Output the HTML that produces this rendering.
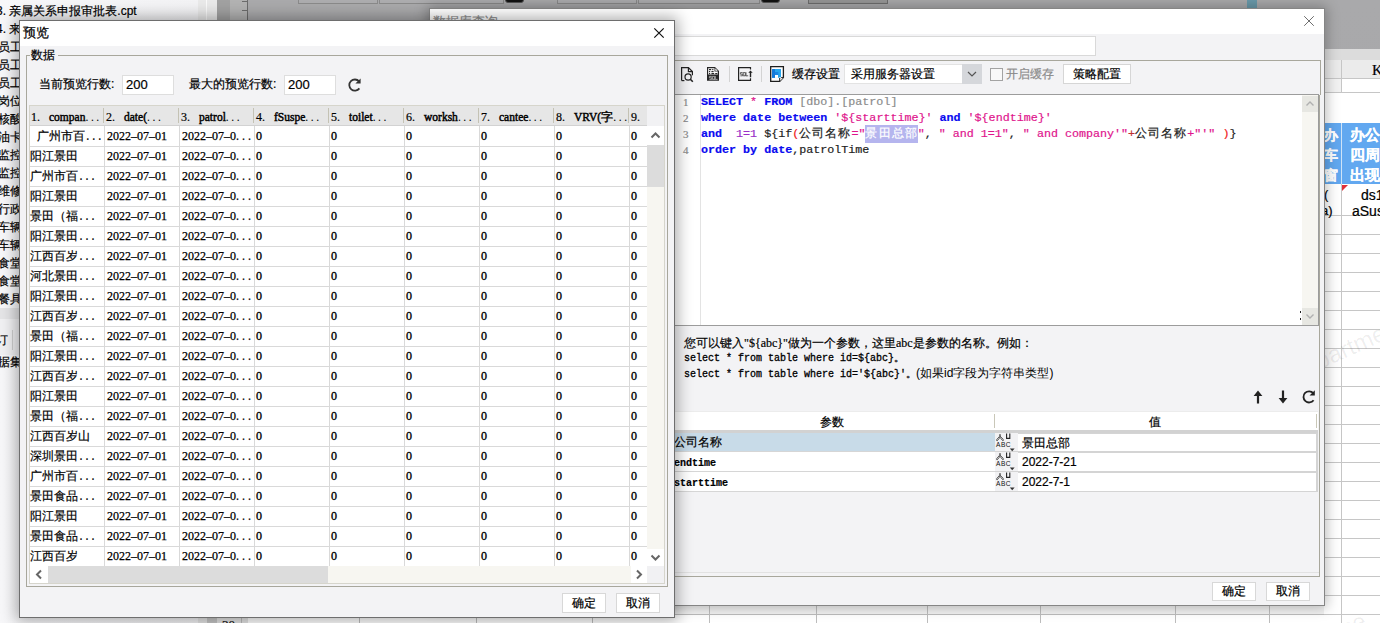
<!DOCTYPE html><html><head><meta charset="utf-8"><style>
*{box-sizing:border-box}
html,body{margin:0;padding:0}
body{width:1380px;height:623px;overflow:hidden;position:relative;background:#a9a9ab;font-family:"Liberation Sans",sans-serif;font-size:12px;color:#000;-webkit-text-stroke:.2px currentColor}
.a{position:absolute}
.mono{font-family:"Liberation Mono",monospace}
.serif{font-family:"Liberation Serif",serif}
.it{position:absolute;white-space:nowrap;font-size:12px;line-height:18px;height:18px}
#fd{left:19px;top:20px;width:656px;height:598px;background:#f3f3f5;border:1px solid #6e6e6e;box-shadow:0 0 14px 3px rgba(0,0,0,.32)}
#bd{left:429px;top:8px;width:896px;height:598px;background:#f3f3f5;border:1px solid #858585;box-shadow:0 0 12px 2px rgba(0,0,0,.26)}
</style></head><body>
<div class="a" style="left:0;top:0;width:1380px;height:623px;background:linear-gradient(#a9a9ab,#a6a6a8)"></div>
<div class="a" style="left:298px;top:-2px;width:80px;height:6px;background:#acacae;border:1px solid #8a8a8a"></div>
<div class="a" style="left:379px;top:-2px;width:125px;height:6px;background:#acacae;border:1px solid #8a8a8a"></div>
<div class="a" style="left:557px;top:-2px;width:80px;height:6px;background:#acacae;border:1px solid #8a8a8a"></div>
<div class="a" style="left:638px;top:-2px;width:122px;height:6px;background:#acacae;border:1px solid #8a8a8a"></div>
<div class="a" style="left:808px;top:-2px;width:80px;height:6px;background:#979797;border:1px solid #6e6e6e"></div>
<div class="a" style="left:505px;top:-3px;width:19px;height:6px;background:#111;border:1px solid #555;border-radius:3px"></div>
<div class="a" style="left:761px;top:-3px;width:19px;height:6px;background:#111;border:1px solid #555;border-radius:3px"></div>
<div class="a" style="left:1247px;top:0;width:10px;height:10px;background:#6a9aaa"></div>
<div class="a" style="left:0;top:0;width:198px;height:308px;background:#fff"></div>
<div class="a" style="left:0;top:0;width:198px;height:623px;background:linear-gradient(90deg,#f7f7f9,#f2f2f4)"></div>
<div class="it" style="top:2px;left:-4px">3. 亲属关系申报审批表.cpt</div>
<div class="it" style="top:20px;left:-4px">4. 来访人员登记表.cpt</div>
<div class="it" style="top:38px;left:-2px">员工信息表.cpt</div>
<div class="it" style="top:56px;left:-2px">员工考勤表.cpt</div>
<div class="it" style="top:74px;left:-2px">员工请假表.cpt</div>
<div class="it" style="top:92px;left:-2px">岗位职责表.cpt</div>
<div class="it" style="top:110px;left:-2px">核酸检测表.cpt</div>
<div class="it" style="top:128px;left:-2px">油卡使用表.cpt</div>
<div class="it" style="top:146px;left:-2px">监控巡查表.cpt</div>
<div class="it" style="top:164px;left:-2px">监控设备表.cpt</div>
<div class="it" style="top:182px;left:-2px">维修记录表.cpt</div>
<div class="it" style="top:200px;left:-2px">行政巡查表.cpt</div>
<div class="it" style="top:218px;left:-2px">车辆使用表.cpt</div>
<div class="it" style="top:236px;left:-2px">车辆维修表.cpt</div>
<div class="it" style="top:254px;left:-2px">食堂巡查表.cpt</div>
<div class="it" style="top:272px;left:-2px">食堂采购表.cpt</div>
<div class="it" style="top:290px;left:-2px">餐具消毒表.cpt</div>
<div class="a" style="left:0;top:308px;width:198px;height:11px;background:#e4e4e6"></div>
<div class="a" style="left:0;top:319px;width:198px;height:36px;background:#f0f0f2"></div>
<div class="it" style="left:-4px;top:331px">订</div>
<div class="a" style="left:12px;top:330px;width:1px;height:20px;background:#d0d0d0"></div>
<div class="it" style="left:-2px;top:353px">据集</div>
<div class="a" style="left:198px;top:0;width:19px;height:623px;background:#e9e9e9"></div>
<div class="a" style="left:206px;top:0;width:1px;height:623px;background:#fafafa"></div>
<div class="a" style="left:217px;top:0;width:13px;height:623px;background:#a1a1a1"></div>
<div class="a" style="left:230px;top:0;width:17px;height:623px;background:#b2b2b2"></div>
<div class="a" style="left:247px;top:0;width:1px;height:623px;background:#6c6c6c"></div>
<div class="a" style="left:242px;top:1px;width:5px;height:1px;background:#6c6c6c"></div>
<div class="a" style="left:242px;top:10px;width:5px;height:1px;background:#6c6c6c"></div>
<div class="a" style="left:1324px;top:49px;width:56px;height:11px;background:#dcdcdc"></div>
<div class="a" style="left:1324px;top:60px;width:56px;height:19px;background:#ebebeb;border-bottom:1px solid #c6c6c6"></div>
<div class="a" style="left:1341px;top:60px;width:1px;height:33px;background:#c6c6c6"></div>
<div class="a serif" style="left:1372px;top:61px;font-size:15px;line-height:18px">K</div>
<div class="a" style="left:1324px;top:79px;width:17px;height:14px;background:#f2f2f2;border-bottom:1px solid #c6c6c6"></div>
<div class="a" style="left:1342px;top:79px;width:38px;height:14px;background:#fff;border-bottom:1px solid #c6c6c6"></div>
<div class="a" style="left:1324px;top:93px;width:56px;height:530px;background:#fff"></div>
<div class="a" style="left:1324px;top:123px;width:56px;height:61px;background:#62a8f0"></div>
<div class="a" style="left:1341px;top:123px;width:1px;height:61px;background:#cfe3f7"></div>
<div class="a" style="left:1324px;top:125px;font-size:14px;font-weight:bold;color:#fff;line-height:20px">办</div>
<div class="a" style="left:1350px;top:125px;font-size:15px;font-weight:bold;color:#fff;line-height:20px;white-space:nowrap">办公</div>
<div class="a" style="left:1324px;top:145px;font-size:14px;font-weight:bold;color:#fff;line-height:20px">车</div>
<div class="a" style="left:1350px;top:145px;font-size:15px;font-weight:bold;color:#fff;line-height:20px;white-space:nowrap">四周</div>
<div class="a" style="left:1324px;top:165px;font-size:14px;font-weight:bold;color:#fff;line-height:20px">窗</div>
<div class="a" style="left:1350px;top:165px;font-size:15px;font-weight:bold;color:#fff;line-height:20px;white-space:nowrap">出现</div>
<div class="a" style="left:1341px;top:184px;width:1px;height:439px;background:#c6c6c6"></div>
<div class="a" style="left:1324px;top:215px;width:56px;height:1px;background:#c6c6c6"></div>
<div class="a" style="left:1324px;top:234px;width:56px;height:1px;background:#c6c6c6"></div>
<div class="a" style="left:1324px;top:253px;width:56px;height:1px;background:#c6c6c6"></div>
<div class="a" style="left:1324px;top:272px;width:56px;height:1px;background:#c6c6c6"></div>
<div class="a" style="left:1324px;top:291px;width:56px;height:1px;background:#c6c6c6"></div>
<div class="a" style="left:1324px;top:310px;width:56px;height:1px;background:#c6c6c6"></div>
<div class="a" style="left:1324px;top:329px;width:56px;height:1px;background:#c6c6c6"></div>
<div class="a" style="left:1324px;top:348px;width:56px;height:1px;background:#c6c6c6"></div>
<div class="a" style="left:1324px;top:367px;width:56px;height:1px;background:#c6c6c6"></div>
<div class="a" style="left:1324px;top:386px;width:56px;height:1px;background:#c6c6c6"></div>
<div class="a" style="left:1324px;top:405px;width:56px;height:1px;background:#c6c6c6"></div>
<div class="a" style="left:1324px;top:424px;width:56px;height:1px;background:#c6c6c6"></div>
<div class="a" style="left:1324px;top:443px;width:56px;height:1px;background:#c6c6c6"></div>
<div class="a" style="left:1324px;top:462px;width:56px;height:1px;background:#c6c6c6"></div>
<div class="a" style="left:1324px;top:481px;width:56px;height:1px;background:#c6c6c6"></div>
<div class="a" style="left:1324px;top:500px;width:56px;height:1px;background:#c6c6c6"></div>
<div class="a" style="left:1324px;top:519px;width:56px;height:1px;background:#c6c6c6"></div>
<div class="a" style="left:1324px;top:538px;width:56px;height:1px;background:#c6c6c6"></div>
<div class="a" style="left:1324px;top:557px;width:56px;height:1px;background:#c6c6c6"></div>
<div class="a" style="left:1324px;top:576px;width:56px;height:1px;background:#c6c6c6"></div>
<div class="a" style="left:1324px;top:595px;width:56px;height:1px;background:#c6c6c6"></div>
<div class="a" style="left:1324px;top:614px;width:56px;height:1px;background:#c6c6c6"></div>
<div class="a" style="left:1324px;top:187px;font-size:13px;line-height:16px">(</div>
<div class="a" style="left:1321px;top:203px;font-size:13px;line-height:16px">a)</div>
<div class="a" style="left:1361px;top:187px;font-size:14px;line-height:16px">ds1</div>
<div class="a" style="left:1352px;top:203px;font-size:14px;line-height:16px;white-space:nowrap">aSus</div>
<div class="a" style="left:1342px;top:185px;width:0;height:0;border-top:6px solid #e0303a;border-right:6px solid transparent"></div>
<div class="a" style="left:1322px;top:347px;font-size:24px;line-height:28px;color:rgba(0,0,0,.07);transform:rotate(-24deg);transform-origin:0 100%;white-space:nowrap">partment</div>
<div class="a" style="left:1322px;top:626px;font-size:24px;line-height:28px;color:rgba(0,0,0,.07);transform:rotate(-24deg);transform-origin:0 100%;white-space:nowrap">rtuse</div>
<div class="a" style="left:248px;top:605px;width:1076px;height:9px;background:#f2f2f2"></div>
<div class="a" style="left:248px;top:614px;width:1076px;height:1px;background:#bdbdbd"></div>
<div class="a" style="left:248px;top:615px;width:1076px;height:8px;background:#fff"></div>
<div class="a" style="left:198px;top:605px;width:50px;height:18px;background:#e4e4e4"></div><div class="a" style="left:207px;top:605px;width:10px;height:18px;background:#c6c6c6"></div>
<div class="a serif" style="left:222px;top:617px;font-size:13px;line-height:16px">30</div>
<div class="a" style="left:241px;top:605px;width:1px;height:18px;background:#bdbdbd"></div>
<div class="a" style="left:359px;top:605px;width:1px;height:18px;background:#bdbdbd"></div>
<div class="a" style="left:476px;top:605px;width:1px;height:18px;background:#bdbdbd"></div>
<div class="a" style="left:592px;top:605px;width:1px;height:18px;background:#bdbdbd"></div>
<div class="a" style="left:709px;top:605px;width:1px;height:18px;background:#bdbdbd"></div>
<div class="a" style="left:816px;top:605px;width:1px;height:18px;background:#bdbdbd"></div>
<div class="a" style="left:927px;top:605px;width:1px;height:18px;background:#bdbdbd"></div>
<div class="a" style="left:1040px;top:605px;width:1px;height:18px;background:#bdbdbd"></div>
<div class="a" style="left:1175px;top:605px;width:1px;height:18px;background:#bdbdbd"></div>
<div class="a" style="left:1269px;top:605px;width:1px;height:18px;background:#bdbdbd"></div>
<div id="bd" class="a"></div>
<div class="a" style="left:430px;top:9px;width:894px;height:25px;background:#fff"></div>
<div class="a" style="left:433px;top:13px;font-size:13px;line-height:18px;color:#8c8c8c;white-space:nowrap">数据库查询</div>
<svg class="a" style="left:1303px;top:15px" width="12" height="12" viewBox="0 0 12 12"><path d="M1.2 1.2L10.8 10.8M10.8 1.2L1.2 10.8" stroke="#6e6e6e" stroke-width="1" fill="none"/></svg>
<div class="a" style="left:436px;top:36px;width:660px;height:20px;background:#fff;border:1px solid #d9d9d9"></div>
<div class="a" style="left:434px;top:60px;width:887px;height:35px;border:1px solid #a8a79c;border-bottom:none"></div>
<svg class="a" style="left:676px;top:62px" width="114" height="26" viewBox="0 0 114 26">
<g fill="none" stroke="#222" stroke-width="1.2">
<path d="M5.6 18.6V5.6H12.4L16.4 9.6V13.3"/><path d="M12.4 5.6V9.6H16.4"/>
<path d="M5.6 18.6H8.4"/>
<circle cx="12.1" cy="15.0" r="3.1"/><path d="M14.3 17.3L16.8 19.8" stroke-width="1.6"/>
</g>
<path d="M31 5H39L43 9V18.8H31Z" fill="#262626"/>
<path d="M32.2 6.2H38.5V9.6H41.8V12.4H32.2Z" fill="#fff"/>
<path d="M39.3 6.3L41.7 8.7H39.3Z" fill="#fff"/>
<g fill="#2a2a2a"><rect x="33" y="7.0" width="2.2" height="1.2"/><rect x="36.2" y="7.0" width="1.2" height="1.2"/><rect x="33" y="9.0" width="1.2" height="1.2"/><rect x="35.4" y="9.0" width="2.2" height="1.2"/><rect x="33" y="11.0" width="1.2" height="1.2"/><rect x="35.4" y="11.0" width="2.8" height="1.2"/><rect x="39.2" y="11.0" width="2.2" height="1.2"/></g>
<path d="M35.73 14.40H33.40V15.90H35.73V17.40H33.40 M36.33 14.40H38.67V17.40H36.33Z M37.73 16.50L39.07 17.80 M39.27 14.10V17.40H41.60" stroke="#b0b0b0" stroke-width="0.9" fill="none"/>
<rect x="53" y="4" width="1" height="16" fill="#d3d3d3"/>
<g fill="none" stroke="#222" stroke-width="1.2"><path d="M74.5 7.6V5.6H62.6V18.3H74.5V16.3"/></g>
<path d="M66.60 10.60H64.40V12.20H66.60V13.80H64.40 M67.20 10.60H69.40V13.80H67.20Z M68.52 12.84L69.80 14.20 M70.00 10.30V13.80H72.20" stroke="#555" stroke-width="0.95" fill="none"/>
<path d="M74.5 8.4L72.3 10.8H73.8V15.2H75.2V10.8H76.7Z" fill="#222"/>
<rect x="85" y="4" width="1" height="16" fill="#d3d3d3"/>
<path d="M94.7 4.7H107.4V15.6L103.7 19.3H94.7Z" fill="#fff" stroke="#1d1d1d" stroke-width="1.3"/>
<path d="M103.7 19.3V15.6H107.4" fill="#fff" stroke="#1d1d1d" stroke-width="1"/>
<rect x="96" y="7" width="9" height="8.8" fill="#27a6ee"/>
<path d="M96 15.8V8.2Q96 7 97.2 7H99V15.8Z" fill="#1479da"/>
<rect x="99" y="10" width="3.3" height="3" fill="#1a84e2"/>
<rect x="99" y="13" width="3" height="2.9" fill="#fff"/>
<path d="M103.2 15.9V15.2H105.2V15.9Z" fill="#fff"/>
</svg>
<div class="a" style="left:792px;top:65px;font-size:12px;line-height:18px;white-space:nowrap">缓存设置</div>
<div class="a" style="left:844px;top:64px;width:138px;height:20px;background:#fff;border:1px solid #e3e3e3"></div>
<div class="a" style="left:962px;top:64px;width:20px;height:20px;background:#d5d7db"></div>
<svg class="a" style="left:965px;top:68px" width="14" height="12"><path d="M3 4L7 8L11 4" stroke="#555" stroke-width="1.2" fill="none"/></svg>
<div class="a" style="left:851px;top:65px;font-size:12px;line-height:18px;white-space:nowrap">采用服务器设置</div>
<div class="a" style="left:990px;top:68px;width:13px;height:13px;border:1px solid #a3a3a3;background:#f8f8f8"></div>
<div class="a" style="left:1006px;top:65px;font-size:12px;line-height:18px;color:#8a8a8a;white-space:nowrap">开启缓存</div>
<div class="a" style="left:1063px;top:64px;width:68px;height:20px;background:#fff;border:1px solid #d6d6d6"></div>
<div class="a" style="left:1073px;top:65px;font-size:12px;line-height:18px;white-space:nowrap">策略配置</div>
<div class="a" style="left:673px;top:94px;width:646px;height:232px;background:#fff;border:1px solid #9c9c9c"></div>
<div class="a" style="left:700px;top:95px;width:1px;height:230px;background:#e3e3e3"></div>
<div class="a serif" style="left:683px;top:94px;font-size:11px;line-height:16px;color:#8a8a8a">1</div>
<div class="a serif" style="left:683px;top:110px;font-size:11px;line-height:16px;color:#8a8a8a">2</div>
<div class="a serif" style="left:683px;top:126px;font-size:11px;line-height:16px;color:#8a8a8a">3</div>
<div class="a serif" style="left:683px;top:142px;font-size:11px;line-height:16px;color:#8a8a8a">4</div>
<div class="a mono" style="left:701px;top:94px;font-size:11.7px;line-height:16px;white-space:nowrap"><span style="color:#0a0af0;font-weight:bold;">SELECT</span><span style="color:#222;">&nbsp;</span><span style="color:#e0148c;">*</span><span style="color:#222;">&nbsp;</span><span style="color:#0a0af0;font-weight:bold;">FROM</span><span style="color:#8c8c8c;">&nbsp;[dbo].[patrol]</span></div>
<div class="a mono" style="left:701px;top:110px;font-size:11.7px;line-height:16px;white-space:nowrap"><span style="color:#0a0af0;font-weight:bold;">where</span><span style="color:#222;">&nbsp;</span><span style="color:#0a0af0;font-weight:bold;">date</span><span style="color:#222;">&nbsp;</span><span style="color:#0a0af0;font-weight:bold;">between</span><span style="color:#e0148c;">&nbsp;'${starttime}'</span><span style="color:#222;">&nbsp;</span><span style="color:#0a0af0;font-weight:bold;">and</span><span style="color:#e0148c;">&nbsp;'${endtime}'</span></div>
<div class="a mono" style="left:701px;top:126px;font-size:11.7px;line-height:16px;white-space:nowrap"><span style="color:#0a0af0;font-weight:bold;">and</span><span style="color:#222;">&nbsp;&nbsp;</span><span style="color:#9b30c8;">1=1</span><span style="color:#222;">&nbsp;${if</span><span style="color:#f02020;">(</span><span style="color:#222;letter-spacing:1.05px;">公司名称</span><span style="color:#e0148c;">="</span><span style="background:#b5b5ee;color:#fff;display:inline-block;height:18px;vertical-align:top;margin-top:-1px;line-height:18px;letter-spacing:1.05px">景田总部</span><span style="color:#e0148c;">"</span><span style="color:#222;">,</span><span style="color:#e0148c;">&nbsp;"&nbsp;and&nbsp;1=1"</span><span style="color:#222;">,</span><span style="color:#e0148c;">&nbsp;"&nbsp;and&nbsp;company'"</span><span style="color:#c03030;">+</span><span style="color:#222;letter-spacing:1.05px;">公司名称</span><span style="color:#e0148c;">+"'"&nbsp;</span><span style="color:#f02020;">)</span><span style="color:#222;">}</span></div>
<div class="a mono" style="left:701px;top:142px;font-size:11.7px;line-height:16px;white-space:nowrap"><span style="color:#0a0af0;font-weight:bold;">order</span><span style="color:#222;">&nbsp;</span><span style="color:#0a0af0;font-weight:bold;">by</span><span style="color:#222;">&nbsp;</span><span style="color:#0a0af0;font-weight:bold;">date</span><span style="color:#222;">,patrolTime</span></div>
<div class="a" style="left:1302px;top:95px;width:16px;height:230px;background:#f7f6f1"></div>
<div class="a" style="left:1302px;top:96px;width:16px;height:16px;background:#e7e7e2"></div>
<svg class="a" style="left:1302px;top:96px" width="16" height="16"><path d="M4.5 9.5L8 6L11.5 9.5" stroke="#b0b0b0" stroke-width="1.4" fill="none"/></svg>
<div class="a" style="left:1302px;top:308px;width:16px;height:17px;background:#e7e7e2"></div>
<svg class="a" style="left:1302px;top:308px" width="16" height="16"><path d="M4.5 6.5L8 10L11.5 6.5" stroke="#b0b0b0" stroke-width="1.4" fill="none"/></svg>
<div class="a" style="left:1300px;top:311px;width:1px;height:2px;background:#222"></div>
<div class="a" style="left:1300px;top:318px;width:1px;height:2px;background:#222"></div>
<div class="a" style="left:684px;top:335px;font-size:12px;line-height:16px;white-space:nowrap">您可以键入<span class="serif">"${abc}"</span>做为一个参数，这里<span class="serif">abc</span>是参数的名称。例如：</div>
<div class="a mono" style="left:684px;top:351px;font-size:10px;line-height:15px;white-space:nowrap;-webkit-text-stroke:.3px #000">select * from table where id=${abc}。</div>
<div class="a mono" style="left:684px;top:366px;font-size:10px;line-height:15px;white-space:nowrap;-webkit-text-stroke:.3px #000">select * from table where id='${abc}'。<span style="font-family:Liberation Sans;-webkit-text-stroke:0;font-size:12px">(如果id字段为字符串类型)</span></div>
<svg class="a" style="left:1250px;top:388px" width="70" height="18" viewBox="0 0 70 18">
<path d="M8 2.5L3.6 8H6.9V15.5H9.1V8H12.4Z" fill="#222"/>
<path d="M33 15.5L28.6 10H31.9V2.5H34.1V10H37.4Z" fill="#222"/>
<path d="M63.3 5.2A5.6 5.6 0 1 0 63.6 12.2" stroke="#222" stroke-width="1.8" fill="none"/>
<path d="M64.8 2.2V7.4H59.6Z" fill="#222"/>
</svg>
<div class="a" style="left:673px;top:411px;width:645px;height:20px;background:#fff;border-top:1px solid #ececec"></div>
<div class="a" style="left:820px;top:413px;font-size:12px;line-height:18px">参数</div>
<div class="a" style="left:1149px;top:413px;font-size:12px;line-height:18px">值</div>
<div class="a" style="left:994px;top:414px;width:1px;height:14px;background:#c9c7b8"></div>
<div class="a" style="left:1316px;top:414px;width:1px;height:14px;background:#c9c7b8"></div>
<div class="a" style="left:673px;top:430px;width:645px;height:3px;background:#d2d2d2"></div>
<div class="a" style="left:673px;top:433px;width:322px;height:19px;background:#c8dbe8;border-bottom:1px solid #d6d6d6"></div>
<div class="a" style="left:674px;top:433px;font-size:12px;line-height:18px;white-space:nowrap">公司名称</div>
<div class="a" style="left:995px;top:433px;width:323px;height:19px;background:#d4d4d4"></div>
<div class="a" style="left:995px;top:433px;width:23px;height:18px;background:#f2f2f4"></div>
<div class="a" style="left:1018px;top:434px;width:298px;height:17px;background:#fff"></div>
<svg class="a" style="left:995px;top:433px" width="23" height="19" viewBox="0 0 23 19"><path d="M1.6 7.6L5 3.6L8.4 7.6" stroke="#333" stroke-width="1.8" stroke-dasharray="1 .6" fill="none"/><path d="M5 1V3" stroke="#333" stroke-width="1"/><path d="M11.6 0.5V5.4H14.8V0.5" stroke="#222" stroke-width="1.1" fill="none"/><text x="1" y="13.6" font-family="Liberation Sans" font-size="6.6" fill="#111" letter-spacing=".5">ABC</text><path d="M14.8 15.6H19.6L17.2 18.2Z" fill="#333"/></svg>
<div class="a" style="left:1022px;top:434px;font-size:12px;line-height:18px">景田总部</div>
<div class="a" style="left:673px;top:452px;width:322px;height:20px;background:#fff;border-bottom:1px solid #d6d6d6"></div>
<div class="a mono" style="left:674px;top:456px;font-size:10px;line-height:15px;font-weight:bold;white-space:nowrap">endtime</div>
<div class="a" style="left:995px;top:452px;width:323px;height:20px;background:#d4d4d4"></div>
<div class="a" style="left:995px;top:452px;width:23px;height:19px;background:#f2f2f4"></div>
<div class="a" style="left:1018px;top:453px;width:298px;height:18px;background:#fff"></div>
<svg class="a" style="left:995px;top:452px" width="23" height="19" viewBox="0 0 23 19"><path d="M1.6 7.6L5 3.6L8.4 7.6" stroke="#333" stroke-width="1.8" stroke-dasharray="1 .6" fill="none"/><path d="M5 1V3" stroke="#333" stroke-width="1"/><path d="M11.6 0.5V5.4H14.8V0.5" stroke="#222" stroke-width="1.1" fill="none"/><text x="1" y="13.6" font-family="Liberation Sans" font-size="6.6" fill="#111" letter-spacing=".5">ABC</text><path d="M14.8 15.6H19.6L17.2 18.2Z" fill="#333"/></svg>
<div class="a" style="left:1022px;top:454px;font-size:12px;line-height:16px">2022-7-21</div>
<div class="a" style="left:673px;top:472px;width:322px;height:20px;background:#fff;border-bottom:1px solid #d6d6d6"></div>
<div class="a mono" style="left:674px;top:476px;font-size:10px;line-height:15px;font-weight:bold;white-space:nowrap">starttime</div>
<div class="a" style="left:995px;top:472px;width:323px;height:20px;background:#d4d4d4"></div>
<div class="a" style="left:995px;top:472px;width:23px;height:19px;background:#f2f2f4"></div>
<div class="a" style="left:1018px;top:473px;width:298px;height:18px;background:#fff"></div>
<svg class="a" style="left:995px;top:472px" width="23" height="19" viewBox="0 0 23 19"><path d="M1.6 7.6L5 3.6L8.4 7.6" stroke="#333" stroke-width="1.8" stroke-dasharray="1 .6" fill="none"/><path d="M5 1V3" stroke="#333" stroke-width="1"/><path d="M11.6 0.5V5.4H14.8V0.5" stroke="#222" stroke-width="1.1" fill="none"/><text x="1" y="13.6" font-family="Liberation Sans" font-size="6.6" fill="#111" letter-spacing=".5">ABC</text><path d="M14.8 15.6H19.6L17.2 18.2Z" fill="#333"/></svg>
<div class="a" style="left:1022px;top:474px;font-size:12px;line-height:16px">2022-7-1</div>
<div class="a" style="left:434px;top:572px;width:886px;height:1px;background:#e2e2e2"></div>
<div class="a" style="left:434px;top:576px;width:886px;height:1px;background:#a8a79c"></div>
<div class="a" style="left:1319px;top:95px;width:1px;height:481px;background:#a8a79c"></div>
<div class="a" style="left:1212px;top:582px;width:44px;height:19px;background:#fff;border:1px solid #d8d8d8"></div>
<div class="a" style="left:1222px;top:582px;font-size:12px;line-height:18px">确定</div>
<div class="a" style="left:1266px;top:582px;width:44px;height:19px;background:#fff;border:1px solid #d8d8d8"></div>
<div class="a" style="left:1276px;top:582px;font-size:12px;line-height:18px">取消</div>
<div id="fd" class="a"></div>
<div class="a" style="left:20px;top:21px;width:654px;height:25px;background:#fff"></div>
<div class="a" style="left:23px;top:24px;font-size:12.5px;line-height:18px;white-space:nowrap">预览</div>
<svg class="a" style="left:653px;top:27px" width="12" height="12" viewBox="0 0 12 12"><path d="M1.3 1.3L10.7 10.7M10.7 1.3L1.3 10.7" stroke="#111" stroke-width="1.2" fill="none"/></svg>
<div class="a" style="left:26px;top:55px;width:642px;height:532px;border:1px solid #a8a79c;border-right-color:#a8a79c"></div>
<div class="a" style="left:30px;top:46px;width:28px;height:18px;background:#f3f3f5"></div>
<div class="a" style="left:31px;top:46px;font-size:12px;line-height:18px">数据</div>
<div class="a" style="left:39px;top:75px;font-size:12px;line-height:18px;white-space:nowrap">当前预览行数:</div>
<div class="a" style="left:122px;top:75px;width:52px;height:20px;background:#fff;border:1px solid #dedede"></div>
<div class="a" style="left:126px;top:77px;font-size:13px;line-height:16px">200</div>
<div class="a" style="left:189px;top:75px;font-size:12px;line-height:18px;white-space:nowrap">最大的预览行数:</div>
<div class="a" style="left:284px;top:75px;width:52px;height:20px;background:#fff;border:1px solid #dedede"></div>
<div class="a" style="left:288px;top:77px;font-size:13px;line-height:16px">200</div>
<svg class="a" style="left:346px;top:77px" width="16" height="16" viewBox="0 0 16 16"><path d="M13.1 4.4A5.6 5.6 0 1 0 13.4 11.4" stroke="#333" stroke-width="1.8" fill="none"/><path d="M14.6 1.4V6.6H9.4Z" fill="#333"/></svg>
<div class="a" style="left:29px;top:105px;width:636px;height:479px;background:#f6f5ef;border:1px solid #d6d5cc"></div>
<div class="a" style="left:30px;top:106px;width:617px;height:21px;background:#e6e6e6;border-bottom:2px solid #d2d2d2"></div><div class="a" style="left:647px;top:106px;width:17px;height:21px;background:#f2f2f4"></div>
<div class="a serif" style="left:31px;top:109px;font-size:12px;line-height:16px;white-space:nowrap">1.</div>
<div class="a serif" style="left:49px;top:109px;font-size:11.5px;line-height:16px;white-space:nowrap;letter-spacing:0;-webkit-text-stroke:.45px #000">compan<span style="-webkit-text-stroke:0;letter-spacing:2.6px">...</span></div>
<div class="a" style="left:103px;top:108px;width:1px;height:15px;background:#c4c2b4"></div>
<div class="a serif" style="left:106px;top:109px;font-size:12px;line-height:16px;white-space:nowrap">2.</div>
<div class="a serif" style="left:124px;top:109px;font-size:11.5px;line-height:16px;white-space:nowrap;letter-spacing:0;-webkit-text-stroke:.45px #000">date(<span style="-webkit-text-stroke:0;letter-spacing:2.6px">...</span></div>
<div class="a" style="left:178px;top:108px;width:1px;height:15px;background:#c4c2b4"></div>
<div class="a serif" style="left:181px;top:109px;font-size:12px;line-height:16px;white-space:nowrap">3.</div>
<div class="a serif" style="left:199px;top:109px;font-size:11.5px;line-height:16px;white-space:nowrap;letter-spacing:0;-webkit-text-stroke:.45px #000">patrol<span style="-webkit-text-stroke:0;letter-spacing:2.6px">...</span></div>
<div class="a" style="left:253px;top:108px;width:1px;height:15px;background:#c4c2b4"></div>
<div class="a serif" style="left:256px;top:109px;font-size:12px;line-height:16px;white-space:nowrap">4.</div>
<div class="a serif" style="left:274px;top:109px;font-size:11.5px;line-height:16px;white-space:nowrap;letter-spacing:0;-webkit-text-stroke:.45px #000">fSuspe<span style="-webkit-text-stroke:0;letter-spacing:2.6px">...</span></div>
<div class="a" style="left:328px;top:108px;width:1px;height:15px;background:#c4c2b4"></div>
<div class="a serif" style="left:331px;top:109px;font-size:12px;line-height:16px;white-space:nowrap">5.</div>
<div class="a serif" style="left:349px;top:109px;font-size:11.5px;line-height:16px;white-space:nowrap;letter-spacing:0;-webkit-text-stroke:.45px #000">toilet<span style="-webkit-text-stroke:0;letter-spacing:2.6px">...</span></div>
<div class="a" style="left:403px;top:108px;width:1px;height:15px;background:#c4c2b4"></div>
<div class="a serif" style="left:406px;top:109px;font-size:12px;line-height:16px;white-space:nowrap">6.</div>
<div class="a serif" style="left:424px;top:109px;font-size:11.5px;line-height:16px;white-space:nowrap;letter-spacing:0;-webkit-text-stroke:.45px #000">worksh<span style="-webkit-text-stroke:0;letter-spacing:2.6px">...</span></div>
<div class="a" style="left:478px;top:108px;width:1px;height:15px;background:#c4c2b4"></div>
<div class="a serif" style="left:481px;top:109px;font-size:12px;line-height:16px;white-space:nowrap">7.</div>
<div class="a serif" style="left:499px;top:109px;font-size:11.5px;line-height:16px;white-space:nowrap;letter-spacing:0;-webkit-text-stroke:.45px #000">cantee<span style="-webkit-text-stroke:0;letter-spacing:2.6px">...</span></div>
<div class="a" style="left:553px;top:108px;width:1px;height:15px;background:#c4c2b4"></div>
<div class="a serif" style="left:556px;top:109px;font-size:12px;line-height:16px;white-space:nowrap">8.</div>
<div class="a serif" style="left:574px;top:109px;font-size:11.5px;line-height:16px;white-space:nowrap;letter-spacing:0;-webkit-text-stroke:.45px #000">VRV(字<span style="-webkit-text-stroke:0;letter-spacing:2.6px">...</span></div>
<div class="a" style="left:628px;top:108px;width:1px;height:15px;background:#c4c2b4"></div>
<div class="a serif" style="left:631px;top:109px;font-size:12px;line-height:16px;white-space:nowrap">9.</div>
<div class="a" style="left:30px;top:126px;width:617px;height:440px;background:#fff"></div>
<div class="a" style="left:30px;top:146px;width:617px;height:1px;background:#d9d9d9"></div>
<div class="a" style="left:30px;top:127px;font-size:12px;line-height:18px;white-space:nowrap">&nbsp;&nbsp;广州市百<span class=mono style=font-size:10px>...</span></div>
<div class="a serif" style="left:107px;top:129px;font-size:12px;letter-spacing:0;line-height:15px;-webkit-text-stroke:.25px #000;white-space:nowrap">2022&ndash;07&ndash;01</div>
<div class="a serif" style="left:182px;top:129px;font-size:12px;letter-spacing:0;line-height:15px;-webkit-text-stroke:.25px #000;white-space:nowrap">2022&ndash;07&ndash;0<span style="letter-spacing:3px">...</span></div>
<div class="a serif" style="left:256px;top:129px;font-size:12px;line-height:15px;-webkit-text-stroke:.35px #000">0</div>
<div class="a serif" style="left:331px;top:129px;font-size:12px;line-height:15px;-webkit-text-stroke:.35px #000">0</div>
<div class="a serif" style="left:406px;top:129px;font-size:12px;line-height:15px;-webkit-text-stroke:.35px #000">0</div>
<div class="a serif" style="left:481px;top:129px;font-size:12px;line-height:15px;-webkit-text-stroke:.35px #000">0</div>
<div class="a serif" style="left:556px;top:129px;font-size:12px;line-height:15px;-webkit-text-stroke:.35px #000">0</div>
<div class="a serif" style="left:631px;top:129px;font-size:12px;line-height:15px;-webkit-text-stroke:.35px #000">0</div>
<div class="a" style="left:30px;top:166px;width:617px;height:1px;background:#d9d9d9"></div>
<div class="a" style="left:30px;top:147px;font-size:12px;line-height:18px;white-space:nowrap">阳江景田</div>
<div class="a serif" style="left:107px;top:149px;font-size:12px;letter-spacing:0;line-height:15px;-webkit-text-stroke:.25px #000;white-space:nowrap">2022&ndash;07&ndash;01</div>
<div class="a serif" style="left:182px;top:149px;font-size:12px;letter-spacing:0;line-height:15px;-webkit-text-stroke:.25px #000;white-space:nowrap">2022&ndash;07&ndash;0<span style="letter-spacing:3px">...</span></div>
<div class="a serif" style="left:256px;top:149px;font-size:12px;line-height:15px;-webkit-text-stroke:.35px #000">0</div>
<div class="a serif" style="left:331px;top:149px;font-size:12px;line-height:15px;-webkit-text-stroke:.35px #000">0</div>
<div class="a serif" style="left:406px;top:149px;font-size:12px;line-height:15px;-webkit-text-stroke:.35px #000">0</div>
<div class="a serif" style="left:481px;top:149px;font-size:12px;line-height:15px;-webkit-text-stroke:.35px #000">0</div>
<div class="a serif" style="left:556px;top:149px;font-size:12px;line-height:15px;-webkit-text-stroke:.35px #000">0</div>
<div class="a serif" style="left:631px;top:149px;font-size:12px;line-height:15px;-webkit-text-stroke:.35px #000">0</div>
<div class="a" style="left:30px;top:186px;width:617px;height:1px;background:#d9d9d9"></div>
<div class="a" style="left:30px;top:167px;font-size:12px;line-height:18px;white-space:nowrap">广州市百<span class=mono style=font-size:10px>...</span></div>
<div class="a serif" style="left:107px;top:169px;font-size:12px;letter-spacing:0;line-height:15px;-webkit-text-stroke:.25px #000;white-space:nowrap">2022&ndash;07&ndash;01</div>
<div class="a serif" style="left:182px;top:169px;font-size:12px;letter-spacing:0;line-height:15px;-webkit-text-stroke:.25px #000;white-space:nowrap">2022&ndash;07&ndash;0<span style="letter-spacing:3px">...</span></div>
<div class="a serif" style="left:256px;top:169px;font-size:12px;line-height:15px;-webkit-text-stroke:.35px #000">0</div>
<div class="a serif" style="left:331px;top:169px;font-size:12px;line-height:15px;-webkit-text-stroke:.35px #000">0</div>
<div class="a serif" style="left:406px;top:169px;font-size:12px;line-height:15px;-webkit-text-stroke:.35px #000">0</div>
<div class="a serif" style="left:481px;top:169px;font-size:12px;line-height:15px;-webkit-text-stroke:.35px #000">0</div>
<div class="a serif" style="left:556px;top:169px;font-size:12px;line-height:15px;-webkit-text-stroke:.35px #000">0</div>
<div class="a serif" style="left:631px;top:169px;font-size:12px;line-height:15px;-webkit-text-stroke:.35px #000">0</div>
<div class="a" style="left:30px;top:206px;width:617px;height:1px;background:#d9d9d9"></div>
<div class="a" style="left:30px;top:187px;font-size:12px;line-height:18px;white-space:nowrap">阳江景田</div>
<div class="a serif" style="left:107px;top:189px;font-size:12px;letter-spacing:0;line-height:15px;-webkit-text-stroke:.25px #000;white-space:nowrap">2022&ndash;07&ndash;01</div>
<div class="a serif" style="left:182px;top:189px;font-size:12px;letter-spacing:0;line-height:15px;-webkit-text-stroke:.25px #000;white-space:nowrap">2022&ndash;07&ndash;0<span style="letter-spacing:3px">...</span></div>
<div class="a serif" style="left:256px;top:189px;font-size:12px;line-height:15px;-webkit-text-stroke:.35px #000">0</div>
<div class="a serif" style="left:331px;top:189px;font-size:12px;line-height:15px;-webkit-text-stroke:.35px #000">0</div>
<div class="a serif" style="left:406px;top:189px;font-size:12px;line-height:15px;-webkit-text-stroke:.35px #000">0</div>
<div class="a serif" style="left:481px;top:189px;font-size:12px;line-height:15px;-webkit-text-stroke:.35px #000">0</div>
<div class="a serif" style="left:556px;top:189px;font-size:12px;line-height:15px;-webkit-text-stroke:.35px #000">0</div>
<div class="a serif" style="left:631px;top:189px;font-size:12px;line-height:15px;-webkit-text-stroke:.35px #000">0</div>
<div class="a" style="left:30px;top:226px;width:617px;height:1px;background:#d9d9d9"></div>
<div class="a" style="left:30px;top:207px;font-size:12px;line-height:18px;white-space:nowrap">景田（福<span class=mono style=font-size:10px>...</span></div>
<div class="a serif" style="left:107px;top:209px;font-size:12px;letter-spacing:0;line-height:15px;-webkit-text-stroke:.25px #000;white-space:nowrap">2022&ndash;07&ndash;01</div>
<div class="a serif" style="left:182px;top:209px;font-size:12px;letter-spacing:0;line-height:15px;-webkit-text-stroke:.25px #000;white-space:nowrap">2022&ndash;07&ndash;0<span style="letter-spacing:3px">...</span></div>
<div class="a serif" style="left:256px;top:209px;font-size:12px;line-height:15px;-webkit-text-stroke:.35px #000">0</div>
<div class="a serif" style="left:331px;top:209px;font-size:12px;line-height:15px;-webkit-text-stroke:.35px #000">0</div>
<div class="a serif" style="left:406px;top:209px;font-size:12px;line-height:15px;-webkit-text-stroke:.35px #000">0</div>
<div class="a serif" style="left:481px;top:209px;font-size:12px;line-height:15px;-webkit-text-stroke:.35px #000">0</div>
<div class="a serif" style="left:556px;top:209px;font-size:12px;line-height:15px;-webkit-text-stroke:.35px #000">0</div>
<div class="a serif" style="left:631px;top:209px;font-size:12px;line-height:15px;-webkit-text-stroke:.35px #000">0</div>
<div class="a" style="left:30px;top:246px;width:617px;height:1px;background:#d9d9d9"></div>
<div class="a" style="left:30px;top:227px;font-size:12px;line-height:18px;white-space:nowrap">阳江景田<span class=mono style=font-size:10px>...</span></div>
<div class="a serif" style="left:107px;top:229px;font-size:12px;letter-spacing:0;line-height:15px;-webkit-text-stroke:.25px #000;white-space:nowrap">2022&ndash;07&ndash;01</div>
<div class="a serif" style="left:182px;top:229px;font-size:12px;letter-spacing:0;line-height:15px;-webkit-text-stroke:.25px #000;white-space:nowrap">2022&ndash;07&ndash;0<span style="letter-spacing:3px">...</span></div>
<div class="a serif" style="left:256px;top:229px;font-size:12px;line-height:15px;-webkit-text-stroke:.35px #000">0</div>
<div class="a serif" style="left:331px;top:229px;font-size:12px;line-height:15px;-webkit-text-stroke:.35px #000">0</div>
<div class="a serif" style="left:406px;top:229px;font-size:12px;line-height:15px;-webkit-text-stroke:.35px #000">0</div>
<div class="a serif" style="left:481px;top:229px;font-size:12px;line-height:15px;-webkit-text-stroke:.35px #000">0</div>
<div class="a serif" style="left:556px;top:229px;font-size:12px;line-height:15px;-webkit-text-stroke:.35px #000">0</div>
<div class="a serif" style="left:631px;top:229px;font-size:12px;line-height:15px;-webkit-text-stroke:.35px #000">0</div>
<div class="a" style="left:30px;top:266px;width:617px;height:1px;background:#d9d9d9"></div>
<div class="a" style="left:30px;top:247px;font-size:12px;line-height:18px;white-space:nowrap">江西百岁<span class=mono style=font-size:10px>...</span></div>
<div class="a serif" style="left:107px;top:249px;font-size:12px;letter-spacing:0;line-height:15px;-webkit-text-stroke:.25px #000;white-space:nowrap">2022&ndash;07&ndash;01</div>
<div class="a serif" style="left:182px;top:249px;font-size:12px;letter-spacing:0;line-height:15px;-webkit-text-stroke:.25px #000;white-space:nowrap">2022&ndash;07&ndash;0<span style="letter-spacing:3px">...</span></div>
<div class="a serif" style="left:256px;top:249px;font-size:12px;line-height:15px;-webkit-text-stroke:.35px #000">0</div>
<div class="a serif" style="left:331px;top:249px;font-size:12px;line-height:15px;-webkit-text-stroke:.35px #000">0</div>
<div class="a serif" style="left:406px;top:249px;font-size:12px;line-height:15px;-webkit-text-stroke:.35px #000">0</div>
<div class="a serif" style="left:481px;top:249px;font-size:12px;line-height:15px;-webkit-text-stroke:.35px #000">0</div>
<div class="a serif" style="left:556px;top:249px;font-size:12px;line-height:15px;-webkit-text-stroke:.35px #000">0</div>
<div class="a serif" style="left:631px;top:249px;font-size:12px;line-height:15px;-webkit-text-stroke:.35px #000">0</div>
<div class="a" style="left:30px;top:286px;width:617px;height:1px;background:#d9d9d9"></div>
<div class="a" style="left:30px;top:267px;font-size:12px;line-height:18px;white-space:nowrap">河北景田<span class=mono style=font-size:10px>...</span></div>
<div class="a serif" style="left:107px;top:269px;font-size:12px;letter-spacing:0;line-height:15px;-webkit-text-stroke:.25px #000;white-space:nowrap">2022&ndash;07&ndash;01</div>
<div class="a serif" style="left:182px;top:269px;font-size:12px;letter-spacing:0;line-height:15px;-webkit-text-stroke:.25px #000;white-space:nowrap">2022&ndash;07&ndash;0<span style="letter-spacing:3px">...</span></div>
<div class="a serif" style="left:256px;top:269px;font-size:12px;line-height:15px;-webkit-text-stroke:.35px #000">0</div>
<div class="a serif" style="left:331px;top:269px;font-size:12px;line-height:15px;-webkit-text-stroke:.35px #000">0</div>
<div class="a serif" style="left:406px;top:269px;font-size:12px;line-height:15px;-webkit-text-stroke:.35px #000">0</div>
<div class="a serif" style="left:481px;top:269px;font-size:12px;line-height:15px;-webkit-text-stroke:.35px #000">0</div>
<div class="a serif" style="left:556px;top:269px;font-size:12px;line-height:15px;-webkit-text-stroke:.35px #000">0</div>
<div class="a serif" style="left:631px;top:269px;font-size:12px;line-height:15px;-webkit-text-stroke:.35px #000">0</div>
<div class="a" style="left:30px;top:306px;width:617px;height:1px;background:#d9d9d9"></div>
<div class="a" style="left:30px;top:287px;font-size:12px;line-height:18px;white-space:nowrap">阳江景田<span class=mono style=font-size:10px>...</span></div>
<div class="a serif" style="left:107px;top:289px;font-size:12px;letter-spacing:0;line-height:15px;-webkit-text-stroke:.25px #000;white-space:nowrap">2022&ndash;07&ndash;01</div>
<div class="a serif" style="left:182px;top:289px;font-size:12px;letter-spacing:0;line-height:15px;-webkit-text-stroke:.25px #000;white-space:nowrap">2022&ndash;07&ndash;0<span style="letter-spacing:3px">...</span></div>
<div class="a serif" style="left:256px;top:289px;font-size:12px;line-height:15px;-webkit-text-stroke:.35px #000">0</div>
<div class="a serif" style="left:331px;top:289px;font-size:12px;line-height:15px;-webkit-text-stroke:.35px #000">0</div>
<div class="a serif" style="left:406px;top:289px;font-size:12px;line-height:15px;-webkit-text-stroke:.35px #000">0</div>
<div class="a serif" style="left:481px;top:289px;font-size:12px;line-height:15px;-webkit-text-stroke:.35px #000">0</div>
<div class="a serif" style="left:556px;top:289px;font-size:12px;line-height:15px;-webkit-text-stroke:.35px #000">0</div>
<div class="a serif" style="left:631px;top:289px;font-size:12px;line-height:15px;-webkit-text-stroke:.35px #000">0</div>
<div class="a" style="left:30px;top:326px;width:617px;height:1px;background:#d9d9d9"></div>
<div class="a" style="left:30px;top:307px;font-size:12px;line-height:18px;white-space:nowrap">江西百岁<span class=mono style=font-size:10px>...</span></div>
<div class="a serif" style="left:107px;top:309px;font-size:12px;letter-spacing:0;line-height:15px;-webkit-text-stroke:.25px #000;white-space:nowrap">2022&ndash;07&ndash;01</div>
<div class="a serif" style="left:182px;top:309px;font-size:12px;letter-spacing:0;line-height:15px;-webkit-text-stroke:.25px #000;white-space:nowrap">2022&ndash;07&ndash;0<span style="letter-spacing:3px">...</span></div>
<div class="a serif" style="left:256px;top:309px;font-size:12px;line-height:15px;-webkit-text-stroke:.35px #000">0</div>
<div class="a serif" style="left:331px;top:309px;font-size:12px;line-height:15px;-webkit-text-stroke:.35px #000">0</div>
<div class="a serif" style="left:406px;top:309px;font-size:12px;line-height:15px;-webkit-text-stroke:.35px #000">0</div>
<div class="a serif" style="left:481px;top:309px;font-size:12px;line-height:15px;-webkit-text-stroke:.35px #000">0</div>
<div class="a serif" style="left:556px;top:309px;font-size:12px;line-height:15px;-webkit-text-stroke:.35px #000">0</div>
<div class="a serif" style="left:631px;top:309px;font-size:12px;line-height:15px;-webkit-text-stroke:.35px #000">0</div>
<div class="a" style="left:30px;top:346px;width:617px;height:1px;background:#d9d9d9"></div>
<div class="a" style="left:30px;top:327px;font-size:12px;line-height:18px;white-space:nowrap">景田（福<span class=mono style=font-size:10px>...</span></div>
<div class="a serif" style="left:107px;top:329px;font-size:12px;letter-spacing:0;line-height:15px;-webkit-text-stroke:.25px #000;white-space:nowrap">2022&ndash;07&ndash;01</div>
<div class="a serif" style="left:182px;top:329px;font-size:12px;letter-spacing:0;line-height:15px;-webkit-text-stroke:.25px #000;white-space:nowrap">2022&ndash;07&ndash;0<span style="letter-spacing:3px">...</span></div>
<div class="a serif" style="left:256px;top:329px;font-size:12px;line-height:15px;-webkit-text-stroke:.35px #000">0</div>
<div class="a serif" style="left:331px;top:329px;font-size:12px;line-height:15px;-webkit-text-stroke:.35px #000">0</div>
<div class="a serif" style="left:406px;top:329px;font-size:12px;line-height:15px;-webkit-text-stroke:.35px #000">0</div>
<div class="a serif" style="left:481px;top:329px;font-size:12px;line-height:15px;-webkit-text-stroke:.35px #000">0</div>
<div class="a serif" style="left:556px;top:329px;font-size:12px;line-height:15px;-webkit-text-stroke:.35px #000">0</div>
<div class="a serif" style="left:631px;top:329px;font-size:12px;line-height:15px;-webkit-text-stroke:.35px #000">0</div>
<div class="a" style="left:30px;top:366px;width:617px;height:1px;background:#d9d9d9"></div>
<div class="a" style="left:30px;top:347px;font-size:12px;line-height:18px;white-space:nowrap">阳江景田<span class=mono style=font-size:10px>...</span></div>
<div class="a serif" style="left:107px;top:349px;font-size:12px;letter-spacing:0;line-height:15px;-webkit-text-stroke:.25px #000;white-space:nowrap">2022&ndash;07&ndash;01</div>
<div class="a serif" style="left:182px;top:349px;font-size:12px;letter-spacing:0;line-height:15px;-webkit-text-stroke:.25px #000;white-space:nowrap">2022&ndash;07&ndash;0<span style="letter-spacing:3px">...</span></div>
<div class="a serif" style="left:256px;top:349px;font-size:12px;line-height:15px;-webkit-text-stroke:.35px #000">0</div>
<div class="a serif" style="left:331px;top:349px;font-size:12px;line-height:15px;-webkit-text-stroke:.35px #000">0</div>
<div class="a serif" style="left:406px;top:349px;font-size:12px;line-height:15px;-webkit-text-stroke:.35px #000">0</div>
<div class="a serif" style="left:481px;top:349px;font-size:12px;line-height:15px;-webkit-text-stroke:.35px #000">0</div>
<div class="a serif" style="left:556px;top:349px;font-size:12px;line-height:15px;-webkit-text-stroke:.35px #000">0</div>
<div class="a serif" style="left:631px;top:349px;font-size:12px;line-height:15px;-webkit-text-stroke:.35px #000">0</div>
<div class="a" style="left:30px;top:386px;width:617px;height:1px;background:#d9d9d9"></div>
<div class="a" style="left:30px;top:367px;font-size:12px;line-height:18px;white-space:nowrap">江西百岁<span class=mono style=font-size:10px>...</span></div>
<div class="a serif" style="left:107px;top:369px;font-size:12px;letter-spacing:0;line-height:15px;-webkit-text-stroke:.25px #000;white-space:nowrap">2022&ndash;07&ndash;01</div>
<div class="a serif" style="left:182px;top:369px;font-size:12px;letter-spacing:0;line-height:15px;-webkit-text-stroke:.25px #000;white-space:nowrap">2022&ndash;07&ndash;0<span style="letter-spacing:3px">...</span></div>
<div class="a serif" style="left:256px;top:369px;font-size:12px;line-height:15px;-webkit-text-stroke:.35px #000">0</div>
<div class="a serif" style="left:331px;top:369px;font-size:12px;line-height:15px;-webkit-text-stroke:.35px #000">0</div>
<div class="a serif" style="left:406px;top:369px;font-size:12px;line-height:15px;-webkit-text-stroke:.35px #000">0</div>
<div class="a serif" style="left:481px;top:369px;font-size:12px;line-height:15px;-webkit-text-stroke:.35px #000">0</div>
<div class="a serif" style="left:556px;top:369px;font-size:12px;line-height:15px;-webkit-text-stroke:.35px #000">0</div>
<div class="a serif" style="left:631px;top:369px;font-size:12px;line-height:15px;-webkit-text-stroke:.35px #000">0</div>
<div class="a" style="left:30px;top:406px;width:617px;height:1px;background:#d9d9d9"></div>
<div class="a" style="left:30px;top:387px;font-size:12px;line-height:18px;white-space:nowrap">阳江景田</div>
<div class="a serif" style="left:107px;top:389px;font-size:12px;letter-spacing:0;line-height:15px;-webkit-text-stroke:.25px #000;white-space:nowrap">2022&ndash;07&ndash;01</div>
<div class="a serif" style="left:182px;top:389px;font-size:12px;letter-spacing:0;line-height:15px;-webkit-text-stroke:.25px #000;white-space:nowrap">2022&ndash;07&ndash;0<span style="letter-spacing:3px">...</span></div>
<div class="a serif" style="left:256px;top:389px;font-size:12px;line-height:15px;-webkit-text-stroke:.35px #000">0</div>
<div class="a serif" style="left:331px;top:389px;font-size:12px;line-height:15px;-webkit-text-stroke:.35px #000">0</div>
<div class="a serif" style="left:406px;top:389px;font-size:12px;line-height:15px;-webkit-text-stroke:.35px #000">0</div>
<div class="a serif" style="left:481px;top:389px;font-size:12px;line-height:15px;-webkit-text-stroke:.35px #000">0</div>
<div class="a serif" style="left:556px;top:389px;font-size:12px;line-height:15px;-webkit-text-stroke:.35px #000">0</div>
<div class="a serif" style="left:631px;top:389px;font-size:12px;line-height:15px;-webkit-text-stroke:.35px #000">0</div>
<div class="a" style="left:30px;top:426px;width:617px;height:1px;background:#d9d9d9"></div>
<div class="a" style="left:30px;top:407px;font-size:12px;line-height:18px;white-space:nowrap">景田（福<span class=mono style=font-size:10px>...</span></div>
<div class="a serif" style="left:107px;top:409px;font-size:12px;letter-spacing:0;line-height:15px;-webkit-text-stroke:.25px #000;white-space:nowrap">2022&ndash;07&ndash;01</div>
<div class="a serif" style="left:182px;top:409px;font-size:12px;letter-spacing:0;line-height:15px;-webkit-text-stroke:.25px #000;white-space:nowrap">2022&ndash;07&ndash;0<span style="letter-spacing:3px">...</span></div>
<div class="a serif" style="left:256px;top:409px;font-size:12px;line-height:15px;-webkit-text-stroke:.35px #000">0</div>
<div class="a serif" style="left:331px;top:409px;font-size:12px;line-height:15px;-webkit-text-stroke:.35px #000">0</div>
<div class="a serif" style="left:406px;top:409px;font-size:12px;line-height:15px;-webkit-text-stroke:.35px #000">0</div>
<div class="a serif" style="left:481px;top:409px;font-size:12px;line-height:15px;-webkit-text-stroke:.35px #000">0</div>
<div class="a serif" style="left:556px;top:409px;font-size:12px;line-height:15px;-webkit-text-stroke:.35px #000">0</div>
<div class="a serif" style="left:631px;top:409px;font-size:12px;line-height:15px;-webkit-text-stroke:.35px #000">0</div>
<div class="a" style="left:30px;top:446px;width:617px;height:1px;background:#d9d9d9"></div>
<div class="a" style="left:30px;top:427px;font-size:12px;line-height:18px;white-space:nowrap">江西百岁山</div>
<div class="a serif" style="left:107px;top:429px;font-size:12px;letter-spacing:0;line-height:15px;-webkit-text-stroke:.25px #000;white-space:nowrap">2022&ndash;07&ndash;01</div>
<div class="a serif" style="left:182px;top:429px;font-size:12px;letter-spacing:0;line-height:15px;-webkit-text-stroke:.25px #000;white-space:nowrap">2022&ndash;07&ndash;0<span style="letter-spacing:3px">...</span></div>
<div class="a serif" style="left:256px;top:429px;font-size:12px;line-height:15px;-webkit-text-stroke:.35px #000">0</div>
<div class="a serif" style="left:331px;top:429px;font-size:12px;line-height:15px;-webkit-text-stroke:.35px #000">0</div>
<div class="a serif" style="left:406px;top:429px;font-size:12px;line-height:15px;-webkit-text-stroke:.35px #000">0</div>
<div class="a serif" style="left:481px;top:429px;font-size:12px;line-height:15px;-webkit-text-stroke:.35px #000">0</div>
<div class="a serif" style="left:556px;top:429px;font-size:12px;line-height:15px;-webkit-text-stroke:.35px #000">0</div>
<div class="a serif" style="left:631px;top:429px;font-size:12px;line-height:15px;-webkit-text-stroke:.35px #000">0</div>
<div class="a" style="left:30px;top:466px;width:617px;height:1px;background:#d9d9d9"></div>
<div class="a" style="left:30px;top:447px;font-size:12px;line-height:18px;white-space:nowrap">深圳景田<span class=mono style=font-size:10px>...</span></div>
<div class="a serif" style="left:107px;top:449px;font-size:12px;letter-spacing:0;line-height:15px;-webkit-text-stroke:.25px #000;white-space:nowrap">2022&ndash;07&ndash;01</div>
<div class="a serif" style="left:182px;top:449px;font-size:12px;letter-spacing:0;line-height:15px;-webkit-text-stroke:.25px #000;white-space:nowrap">2022&ndash;07&ndash;0<span style="letter-spacing:3px">...</span></div>
<div class="a serif" style="left:256px;top:449px;font-size:12px;line-height:15px;-webkit-text-stroke:.35px #000">0</div>
<div class="a serif" style="left:331px;top:449px;font-size:12px;line-height:15px;-webkit-text-stroke:.35px #000">0</div>
<div class="a serif" style="left:406px;top:449px;font-size:12px;line-height:15px;-webkit-text-stroke:.35px #000">0</div>
<div class="a serif" style="left:481px;top:449px;font-size:12px;line-height:15px;-webkit-text-stroke:.35px #000">0</div>
<div class="a serif" style="left:556px;top:449px;font-size:12px;line-height:15px;-webkit-text-stroke:.35px #000">0</div>
<div class="a serif" style="left:631px;top:449px;font-size:12px;line-height:15px;-webkit-text-stroke:.35px #000">0</div>
<div class="a" style="left:30px;top:486px;width:617px;height:1px;background:#d9d9d9"></div>
<div class="a" style="left:30px;top:467px;font-size:12px;line-height:18px;white-space:nowrap">广州市百<span class=mono style=font-size:10px>...</span></div>
<div class="a serif" style="left:107px;top:469px;font-size:12px;letter-spacing:0;line-height:15px;-webkit-text-stroke:.25px #000;white-space:nowrap">2022&ndash;07&ndash;01</div>
<div class="a serif" style="left:182px;top:469px;font-size:12px;letter-spacing:0;line-height:15px;-webkit-text-stroke:.25px #000;white-space:nowrap">2022&ndash;07&ndash;0<span style="letter-spacing:3px">...</span></div>
<div class="a serif" style="left:256px;top:469px;font-size:12px;line-height:15px;-webkit-text-stroke:.35px #000">0</div>
<div class="a serif" style="left:331px;top:469px;font-size:12px;line-height:15px;-webkit-text-stroke:.35px #000">0</div>
<div class="a serif" style="left:406px;top:469px;font-size:12px;line-height:15px;-webkit-text-stroke:.35px #000">0</div>
<div class="a serif" style="left:481px;top:469px;font-size:12px;line-height:15px;-webkit-text-stroke:.35px #000">0</div>
<div class="a serif" style="left:556px;top:469px;font-size:12px;line-height:15px;-webkit-text-stroke:.35px #000">0</div>
<div class="a serif" style="left:631px;top:469px;font-size:12px;line-height:15px;-webkit-text-stroke:.35px #000">0</div>
<div class="a" style="left:30px;top:506px;width:617px;height:1px;background:#d9d9d9"></div>
<div class="a" style="left:30px;top:487px;font-size:12px;line-height:18px;white-space:nowrap">景田食品<span class=mono style=font-size:10px>...</span></div>
<div class="a serif" style="left:107px;top:489px;font-size:12px;letter-spacing:0;line-height:15px;-webkit-text-stroke:.25px #000;white-space:nowrap">2022&ndash;07&ndash;01</div>
<div class="a serif" style="left:182px;top:489px;font-size:12px;letter-spacing:0;line-height:15px;-webkit-text-stroke:.25px #000;white-space:nowrap">2022&ndash;07&ndash;0<span style="letter-spacing:3px">...</span></div>
<div class="a serif" style="left:256px;top:489px;font-size:12px;line-height:15px;-webkit-text-stroke:.35px #000">0</div>
<div class="a serif" style="left:331px;top:489px;font-size:12px;line-height:15px;-webkit-text-stroke:.35px #000">0</div>
<div class="a serif" style="left:406px;top:489px;font-size:12px;line-height:15px;-webkit-text-stroke:.35px #000">0</div>
<div class="a serif" style="left:481px;top:489px;font-size:12px;line-height:15px;-webkit-text-stroke:.35px #000">0</div>
<div class="a serif" style="left:556px;top:489px;font-size:12px;line-height:15px;-webkit-text-stroke:.35px #000">0</div>
<div class="a serif" style="left:631px;top:489px;font-size:12px;line-height:15px;-webkit-text-stroke:.35px #000">0</div>
<div class="a" style="left:30px;top:526px;width:617px;height:1px;background:#d9d9d9"></div>
<div class="a" style="left:30px;top:507px;font-size:12px;line-height:18px;white-space:nowrap">阳江景田</div>
<div class="a serif" style="left:107px;top:509px;font-size:12px;letter-spacing:0;line-height:15px;-webkit-text-stroke:.25px #000;white-space:nowrap">2022&ndash;07&ndash;01</div>
<div class="a serif" style="left:182px;top:509px;font-size:12px;letter-spacing:0;line-height:15px;-webkit-text-stroke:.25px #000;white-space:nowrap">2022&ndash;07&ndash;0<span style="letter-spacing:3px">...</span></div>
<div class="a serif" style="left:256px;top:509px;font-size:12px;line-height:15px;-webkit-text-stroke:.35px #000">0</div>
<div class="a serif" style="left:331px;top:509px;font-size:12px;line-height:15px;-webkit-text-stroke:.35px #000">0</div>
<div class="a serif" style="left:406px;top:509px;font-size:12px;line-height:15px;-webkit-text-stroke:.35px #000">0</div>
<div class="a serif" style="left:481px;top:509px;font-size:12px;line-height:15px;-webkit-text-stroke:.35px #000">0</div>
<div class="a serif" style="left:556px;top:509px;font-size:12px;line-height:15px;-webkit-text-stroke:.35px #000">0</div>
<div class="a serif" style="left:631px;top:509px;font-size:12px;line-height:15px;-webkit-text-stroke:.35px #000">0</div>
<div class="a" style="left:30px;top:546px;width:617px;height:1px;background:#d9d9d9"></div>
<div class="a" style="left:30px;top:527px;font-size:12px;line-height:18px;white-space:nowrap">景田食品<span class=mono style=font-size:10px>...</span></div>
<div class="a serif" style="left:107px;top:529px;font-size:12px;letter-spacing:0;line-height:15px;-webkit-text-stroke:.25px #000;white-space:nowrap">2022&ndash;07&ndash;01</div>
<div class="a serif" style="left:182px;top:529px;font-size:12px;letter-spacing:0;line-height:15px;-webkit-text-stroke:.25px #000;white-space:nowrap">2022&ndash;07&ndash;0<span style="letter-spacing:3px">...</span></div>
<div class="a serif" style="left:256px;top:529px;font-size:12px;line-height:15px;-webkit-text-stroke:.35px #000">0</div>
<div class="a serif" style="left:331px;top:529px;font-size:12px;line-height:15px;-webkit-text-stroke:.35px #000">0</div>
<div class="a serif" style="left:406px;top:529px;font-size:12px;line-height:15px;-webkit-text-stroke:.35px #000">0</div>
<div class="a serif" style="left:481px;top:529px;font-size:12px;line-height:15px;-webkit-text-stroke:.35px #000">0</div>
<div class="a serif" style="left:556px;top:529px;font-size:12px;line-height:15px;-webkit-text-stroke:.35px #000">0</div>
<div class="a serif" style="left:631px;top:529px;font-size:12px;line-height:15px;-webkit-text-stroke:.35px #000">0</div>
<div class="a" style="left:30px;top:566px;width:617px;height:1px;background:#d9d9d9"></div>
<div class="a" style="left:30px;top:547px;font-size:12px;line-height:18px;white-space:nowrap">江西百岁</div>
<div class="a serif" style="left:107px;top:549px;font-size:12px;letter-spacing:0;line-height:15px;-webkit-text-stroke:.25px #000;white-space:nowrap">2022&ndash;07&ndash;01</div>
<div class="a serif" style="left:182px;top:549px;font-size:12px;letter-spacing:0;line-height:15px;-webkit-text-stroke:.25px #000;white-space:nowrap">2022&ndash;07&ndash;0<span style="letter-spacing:3px">...</span></div>
<div class="a serif" style="left:256px;top:549px;font-size:12px;line-height:15px;-webkit-text-stroke:.35px #000">0</div>
<div class="a serif" style="left:331px;top:549px;font-size:12px;line-height:15px;-webkit-text-stroke:.35px #000">0</div>
<div class="a serif" style="left:406px;top:549px;font-size:12px;line-height:15px;-webkit-text-stroke:.35px #000">0</div>
<div class="a serif" style="left:481px;top:549px;font-size:12px;line-height:15px;-webkit-text-stroke:.35px #000">0</div>
<div class="a serif" style="left:556px;top:549px;font-size:12px;line-height:15px;-webkit-text-stroke:.35px #000">0</div>
<div class="a serif" style="left:631px;top:549px;font-size:12px;line-height:15px;-webkit-text-stroke:.35px #000">0</div>
<div class="a" style="left:104px;top:126px;width:1px;height:440px;background:#d9d9d9"></div>
<div class="a" style="left:179px;top:126px;width:1px;height:440px;background:#d9d9d9"></div>
<div class="a" style="left:254px;top:126px;width:1px;height:440px;background:#d9d9d9"></div>
<div class="a" style="left:329px;top:126px;width:1px;height:440px;background:#d9d9d9"></div>
<div class="a" style="left:404px;top:126px;width:1px;height:440px;background:#d9d9d9"></div>
<div class="a" style="left:479px;top:126px;width:1px;height:440px;background:#d9d9d9"></div>
<div class="a" style="left:554px;top:126px;width:1px;height:440px;background:#d9d9d9"></div>
<div class="a" style="left:629px;top:126px;width:1px;height:440px;background:#d9d9d9"></div>
<div class="a" style="left:647px;top:126px;width:17px;height:440px;background:#f7f6f1"></div>
<div class="a" style="left:647px;top:126px;width:17px;height:19px;background:#fff"></div>
<svg class="a" style="left:647px;top:126px" width="17" height="19"><path d="M4.5 11.5L8.5 7.5L12.5 11.5" stroke="#666" stroke-width="2" fill="none"/></svg>
<div class="a" style="left:647px;top:145px;width:17px;height:42px;background:#dcdcdc"></div>
<div class="a" style="left:647px;top:549px;width:17px;height:17px;background:#fff"></div>
<svg class="a" style="left:647px;top:549px" width="17" height="17"><path d="M4.5 6.5L8.5 10.5L12.5 6.5" stroke="#666" stroke-width="2" fill="none"/></svg>
<div class="a" style="left:30px;top:566px;width:634px;height:17px;background:#f7f6f1"></div>
<div class="a" style="left:30px;top:566px;width:18px;height:17px;background:#fff"></div>
<svg class="a" style="left:31px;top:566px" width="16" height="17"><path d="M10 4.5L6 8.5L10 12.5" stroke="#666" stroke-width="2" fill="none"/></svg>
<div class="a" style="left:48px;top:566px;width:280px;height:17px;background:#dcdcdc"></div>
<div class="a" style="left:631px;top:566px;width:16px;height:17px;background:#fff"></div>
<svg class="a" style="left:631px;top:566px" width="16" height="17"><path d="M6 4.5L10 8.5L6 12.5" stroke="#666" stroke-width="2" fill="none"/></svg>
<div class="a" style="left:647px;top:566px;width:17px;height:17px;background:#f1f1f3"></div>
<div class="a" style="left:562px;top:593px;width:44px;height:20px;background:#fff;border:1px solid #d8d8d8"></div>
<div class="a" style="left:572px;top:594px;font-size:12px;line-height:18px">确定</div>
<div class="a" style="left:616px;top:593px;width:44px;height:20px;background:#fff;border:1px solid #d8d8d8"></div>
<div class="a" style="left:626px;top:594px;font-size:12px;line-height:18px">取消</div>
</body></html>
